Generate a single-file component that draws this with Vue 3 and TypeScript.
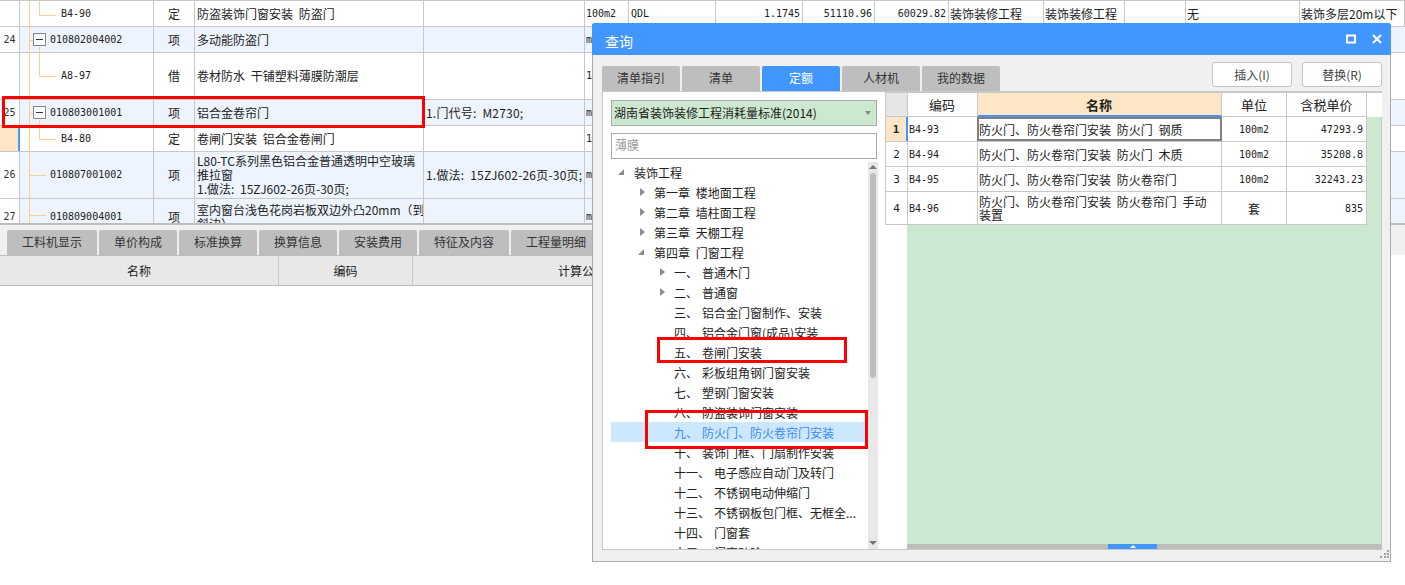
<script setup lang="ts">
interface Row {
  num: string
  code: string
  type: string
  name: string
  feature: string
  unit: string
  h: number
  alt: boolean
  box: boolean
  leaf: boolean
  mark?: boolean
}
const rows: Row[] = [
  { num: '', code: 'B4-90', type: '定', name: '防盗装饰门窗安装 防盗门', feature: '', unit: '100m2', h: 26, alt: false, box: false, leaf: true },
  { num: '24', code: '010802004002', type: '项', name: '多动能防盗门', feature: '', unit: 'm', h: 26, alt: true, box: true, leaf: false },
  { num: '', code: 'A8-97', type: '借', name: '卷材防水 干铺塑料薄膜防潮层', feature: '', unit: '1', h: 47, alt: false, box: false, leaf: true },
  { num: '25', code: '010803001001', type: '项', name: '铝合金卷帘门', feature: '1.门代号: M2730;', unit: 'm', h: 26, alt: true, box: true, leaf: false },
  { num: '', code: 'B4-80', type: '定', name: '卷闸门安装 铝合金卷闸门', feature: '', unit: '1', h: 26, alt: false, box: false, leaf: true, mark: true },
  { num: '26', code: '010807001002', type: '项', name: 'L80-TC系列黑色铝合金普通透明中空玻璃\n推拉窗\n1.做法: 15ZJ602-26页-30页;', feature: '1.做法: 15ZJ602-26页-30页;', unit: 'm', h: 47, alt: true, box: false, leaf: false },
  { num: '27', code: '010809004001', type: '项', name: '室内窗台浅色花岗岩板双边外凸20mm（到\n斜边）', feature: '', unit: 'm', h: 36, alt: true, box: false, leaf: false },
]
const firstExtras = ['QDL', '1.1745', '51110.96', '60029.82', '装饰装修工程', '装饰装修工程', '', '无', '装饰多层20m以下']
const bottomTabs = [
  { t: '工料机显示', w: 90 }, { t: '单价构成', w: 78 }, { t: '标准换算', w: 78 }, { t: '换算信息', w: 78 },
  { t: '安装费用', w: 78 }, { t: '特征及内容', w: 90 }, { t: '工程量明细', w: 90 },
]
const dlgTabs = ['清单指引', '清单', '定额', '人材机', '我的数据']
interface Node { label: string; sub?: string; lvl: number; icon?: 'open' | 'closed'; sel?: boolean }
const tree: Node[] = [
  { label: '装饰工程', lvl: 0, icon: 'open' },
  { label: '第一章 楼地面工程', lvl: 1, icon: 'closed' },
  { label: '第二章 墙柱面工程', lvl: 1, icon: 'closed' },
  { label: '第三章 天棚工程', lvl: 1, icon: 'closed' },
  { label: '第四章 门窗工程', lvl: 1, icon: 'open' },
  { label: '一、', sub: '普通木门', lvl: 2, icon: 'closed' },
  { label: '二、', sub: '普通窗', lvl: 2, icon: 'closed' },
  { label: '三、', sub: '铝合金门窗制作、安装', lvl: 2 },
  { label: '四、', sub: '铝合金门窗(成品)安装', lvl: 2 },
  { label: '五、', sub: '卷闸门安装', lvl: 2 },
  { label: '六、', sub: '彩板组角钢门窗安装', lvl: 2 },
  { label: '七、', sub: '塑钢门窗安装', lvl: 2 },
  { label: '八、', sub: '防盗装饰门窗安装', lvl: 2 },
  { label: '九、', sub: '防火门、防火卷帘门安装', lvl: 2, sel: true },
  { label: '十、', sub: '装饰门框、门扇制作安装', lvl: 2 },
  { label: '十一、', sub: '电子感应自动门及转门', lvl: 2 },
  { label: '十二、', sub: '不锈钢电动伸缩门', lvl: 2 },
  { label: '十三、', sub: '不锈钢板包门框、无框全...', lvl: 2 },
  { label: '十四、', sub: '门窗套', lvl: 2 },
  { label: '十五、', sub: '门窗贴脸', lvl: 2 },
]
const quota = [
  { n: '1', code: 'B4-93', name: '防火门、防火卷帘门安装 防火门 钢质', unit: '100m2', price: '47293.9', h: 25 },
  { n: '2', code: 'B4-94', name: '防火门、防火卷帘门安装 防火门 木质', unit: '100m2', price: '35208.8', h: 25 },
  { n: '3', code: 'B4-95', name: '防火门、防火卷帘门安装 防火卷帘门', unit: '100m2', price: '32243.23', h: 25 },
  { n: '4', code: 'B4-96', name: '防火门、防火卷帘门安装 防火卷帘门 手动\n装置', unit: '套', price: '835', h: 33 },
]
</script>

<template>
  <div class="page">
    <div class="grid">
      <div
        v-for="(r, i) in rows"
        :key="i"
        class="row"
        :class="{ alt: r.alt }"
        :style="{ height: r.h + 'px' }"
      >
        <div class="c num" :class="{ mark: r.mark }">{{ r.num }}</div>
        <div class="c code" :class="{ leaf: r.leaf, boxed: r.box }">
          <span v-if="r.box" class="minus"></span>
          <span class="mono">{{ r.code }}</span>
        </div>
        <div class="c type">{{ r.type }}</div>
        <div class="c name">{{ r.name }}</div>
        <div class="c feature">{{ r.feature }}</div>
        <div class="c unit mono">{{ r.unit }}</div>
        <template v-if="i === 0">
          <div class="c mono">{{ firstExtras[0] }}</div>
          <div class="c mono end">{{ firstExtras[1] }}</div>
          <div class="c mono end">{{ firstExtras[2] }}</div>
          <div class="c mono end">{{ firstExtras[3] }}</div>
          <div class="c tight">{{ firstExtras[4] }}</div>
          <div class="c tight">{{ firstExtras[5] }}</div>
          <div class="c tight">{{ firstExtras[6] }}</div>
          <div class="c tight">{{ firstExtras[7] }}</div>
          <div class="c tight nowrap">{{ firstExtras[8] }}</div>
        </template>
      </div>
      <svg class="lines" width="60" height="223" viewBox="0 0 60 223">
        <g stroke="#fbcf8e" stroke-width="1" fill="none">
          <path d="M29.5 0V223" />
          <path d="M39.5 0V14.5H56" />
          <path d="M29 39.5H33" />
          <path d="M39.5 46V75.5H56" />
          <path d="M29 112.5H33" />
          <path d="M39.5 119V138.5H56" />
          <path d="M29 174.5H46" />
          <path d="M29 214.5H46" />
        </g>
      </svg>
    </div>

    <div class="btabs">
      <div v-for="t in bottomTabs" :key="t.t" class="btab" :style="{ width: t.w + 'px' }">{{ t.t }}</div>
    </div>
    <div class="bhead">
      <div class="bh b1">名称</div>
      <div class="bh b2">编码</div>
      <div class="bh b3">计算公式</div>
    </div>

    <section class="dialog">
      <header class="dtitle">
        <span class="ttext">查询</span>
        <span class="dctl">
          <svg width="10" height="10" viewBox="0 0 10 10"><rect x="1" y="1.5" width="8" height="7" fill="none" stroke="#fff" stroke-width="2" /></svg>
          <svg width="10" height="10" viewBox="0 0 10 10"><path d="M1 1L9 9M9 1L1 9" stroke="#fff" stroke-width="2" fill="none" /></svg>
        </span>
      </header>
      <div class="dbar">
        <div class="dtabs">
          <div v-for="t in dlgTabs" :key="t" class="dtab" :class="{ on: t === '定额' }">{{ t }}</div>
        </div>
        <div class="dbtns">
          <button class="btn">插入(I)</button>
          <button class="btn">替换(R)</button>
        </div>
      </div>
      <div class="panel">
        <div class="left">
          <div class="select">
            <span>湖南省装饰装修工程消耗量标准(2014)</span>
            <i class="caret"></i>
          </div>
          <div class="search">薄膜</div>
          <div class="treewrap">
            <div class="tree">
              <div
                v-for="n in tree"
                :key="n.label"
                class="node"
                :class="['l' + n.lvl, { sel: n.sel }]"
              >
                <i v-if="n.icon" class="ic" :class="n.icon"></i>
                <span>{{ n.label }}</span>
                <span v-if="n.sub" class="sub">{{ n.sub }}</span>
              </div>
            </div>
            <div class="vbar">
              <i class="up"></i>
              <div class="thumb"></div>
              <i class="down"></i>
            </div>
          </div>
        </div>
        <div class="result">
          <div class="qtable">
            <div class="qrow qhead">
              <div class="q qn gray"></div>
              <div class="q qc center">编码</div>
              <div class="q qm center act">名称</div>
              <div class="q qu center">单位</div>
              <div class="q qp center">含税单价</div>
            </div>
            <div v-for="(q, i) in quota" :key="q.n" class="qrow" :style="{ height: q.h + 'px' }">
              <div class="q qn center" :class="{ cur: i === 0 }">{{ q.n }}</div>
              <div class="q qc qmono">{{ q.code }}</div>
              <div class="q qm" :class="{ focus: i === 0 }">{{ q.name }}</div>
              <div class="q qu center" :class="{ qmono: q.unit !== '套' }">{{ q.unit }}</div>
              <div class="q qp rightal qmono">{{ q.price }}</div>
            </div>
          </div>
          <div class="hbar"><div class="hthumb"><i></i></div></div>
        </div>
      </div>
      <div class="grip">
        <svg width="10" height="10" viewBox="0 0 10 10" fill="#a0a0a0">
          <rect x="7" y="0" width="2" height="2" /><rect x="4" y="3" width="2" height="2" /><rect x="7" y="3" width="2" height="2" />
          <rect x="0" y="6" width="2" height="2" /><rect x="4" y="6" width="2" height="2" /><rect x="7" y="6" width="2" height="2" />
        </svg>
      </div>
    </section>

    <div class="red r1"></div>
    <div class="red r2"></div>
    <div class="red r3"></div>
  </div>
</template>

<style scoped>
.page {
  position: relative;
  width: 1405px;
  height: 585px;
  overflow: hidden;
  background: #fff;
  font-family: "Noto Sans CJK SC", "Liberation Sans", sans-serif;
  font-size: 12px;
  color: #222;
  word-spacing: 3px;
}
.grid {
  position: relative;
  height: 225px;
  overflow: hidden;
  border-top: 1px solid #c8c8c8;
  border-bottom: 2px solid #bdbdbd;
  box-sizing: border-box;
}
.row {
  display: grid;
  grid-template-columns: 20px 134px 41px 229px 161px 44px 87px 87px 72px 74px 95px 81px 61px 114px 105px;
  border-bottom: 1px solid #c8c8c8;
  box-sizing: border-box;
}
.row.alt { background: #edf4fe; }
.row.alt .num { background: #fff; }
.c {
  display: flex;
  align-items: center;
  padding: 0 2px;
  border-right: 1px solid #c8c8c8;
  box-sizing: border-box;
  overflow: hidden;
  white-space: pre-wrap;
  line-height: 14px;
}
.num {
  padding: 0;
  font-family: "DejaVu Sans Mono", monospace;
  font-size: 10px;
  justify-content: center;
  color: #333;
}
.num.mark { background: #fde6c6; border-right: 2px solid #4196ff; }
.code { padding-left: 30px; gap: 4px; }
.code.boxed { padding-left: 13px; }
.code.leaf { padding-left: 41px; }
.minus {
  position: relative;
  flex: none;
  width: 13px;
  height: 13px;
  box-sizing: border-box;
  border: 1px solid #888;
  background: #fff;
  z-index: 1;
}
.minus::after {
  content: "";
  position: absolute;
  left: 2px;
  right: 2px;
  top: 5px;
  height: 1px;
  background: #333;
}
.mono { font-family: "DejaVu Sans Mono", monospace; font-size: 10px; }
.type { justify-content: center; }
.name { padding-left: 2px; white-space: pre; }
.feature { padding-left: 2px; white-space: nowrap; letter-spacing: 0.2px; }
.unit { padding-left: 1px; }
.end { justify-content: flex-end; padding-right: 2px; }
.tight { padding-left: 1px; }
.nowrap { white-space: nowrap; }
.lines { position: absolute; left: 0; top: 0; pointer-events: none; }

.btabs {
  display: flex;
  gap: 2px;
  padding: 5px 0 0 7px;
  height: 30px;
  box-sizing: border-box;
  background: #f0f0f0;
}
.btab {
  flex: none;
  height: 25px;
  line-height: 23px;
  text-align: center;
  background: #bebebe;
  color: #333;
  border-radius: 2px 2px 0 0;
}
.bhead {
  display: grid;
  grid-template-columns: 279px 134px 1fr;
  width: 1000px;
  height: 31px;
  background: #e8e8e8;
  border-top: 1px solid #bdbdbd;
  border-bottom: 1px solid #bdbdbd;
  box-sizing: border-box;
}
.bh {
  display: flex;
  align-items: center;
  justify-content: center;
  border-right: 1px solid #c8c8c8;
}
.b3 { justify-content: flex-start; padding-left: 145px; }

.dialog {
  position: absolute;
  left: 592px;
  top: 23px;
  width: 799px;
  height: 539px;
  box-sizing: border-box;
  background: #f0f0f0;
  border: 1px solid #aaa;
  border-top: 0;
  border-radius: 3px 3px 0 0;
  display: flex;
  flex-direction: column;
}
.dtitle {
  flex: none;
  height: 32px;
  margin: 0 -1px;
  padding: 0 9px 0 13px;
  background: #4196ff;
  color: #fff;
  font-size: 14px;
  display: flex;
  align-items: center;
  justify-content: space-between;
  border-radius: 3px 3px 0 0;
}
.ttext { padding-top: 3px; }
.dctl { display: flex; gap: 16px; }
.dbar {
  flex: none;
  height: 36px;
  padding: 0 8px 0 9px;
  display: flex;
  justify-content: space-between;
}
.dtabs { display: flex; gap: 2px; align-items: flex-end; }
.dtab {
  width: 78px;
  height: 25px;
  line-height: 23px;
  text-align: center;
  background: #bebebe;
  color: #333;
  border-radius: 2px 2px 0 0;
}
.dtab.on { background: #4196ff; color: #fff; }
.dbtns { display: flex; gap: 10px; padding-top: 7px; }
.btn {
  width: 80px;
  height: 25px;
  padding: 0;
  border: 1px solid #c4c4c4;
  border-radius: 3px;
  background: #fff;
  color: #444;
  font: inherit;
}
.panel {
  height: 459px;
  margin: 0 8px 0 9px;
  display: flex;
  background: #fff;
  border: 1px solid #c8c8c8;
  box-sizing: border-box;
  flex: none;
}
.left {
  flex: none;
  width: 282px;
  box-sizing: border-box;
  padding: 8px 6px 0 8px;
  display: flex;
  flex-direction: column;
}
.select {
  flex: none;
  width: 266px;
  height: 26px;
  box-sizing: border-box;
  padding: 0 5px 1px 2px;
  background: #cce8cf;
  border: 1px solid #aaa;
  display: flex;
  align-items: center;
  justify-content: space-between;
  color: #222;
}
.caret {
  width: 0;
  height: 0;
  border-left: 3px solid transparent;
  border-right: 3px solid transparent;
  border-top: 4px solid #888;
}
.search {
  flex: none;
  width: 266px;
  height: 26px;
  margin-top: 7px;
  box-sizing: border-box;
  border: 1px solid #aaa;
  padding: 0 3px;
  line-height: 22px;
  color: #999;
}
.treewrap {
  flex: 1;
  min-height: 0;
  margin-top: 3px;
  display: flex;
  overflow: hidden;
}
.tree { width: 257px; flex: none; overflow: hidden; }
.node {
  height: 20px;
  display: flex;
  align-items: center;
  position: relative;
  color: #222;
  white-space: nowrap;
}
.node.l0 { padding-left: 23px; }
.node.l1 { padding-left: 43px; }
.node.l2 { padding-left: 63px; }
.sub { margin-left: 4px; }
.node.sel { background: #cce8ff; color: #3d8bef; }
.ic { position: absolute; width: 0; height: 0; }
.l0 .ic { left: 7px; }
.l1 .ic { left: 27px; }
.l2 .ic { left: 47px; }
.ic.closed {
  margin-left: 2px;
  border-top: 4px solid transparent;
  border-bottom: 4px solid transparent;
  border-left: 5px solid #8c8c8c;
}
.ic.open {
  border-left: 6px solid transparent;
  border-bottom: 6px solid #8c8c8c;
}
.vbar {
  flex: none;
  width: 10px;
  background: #e8e8e8;
  display: flex;
  flex-direction: column;
  align-items: center;
  position: relative;
}
.up, .down {
  flex: none;
  width: 0;
  height: 0;
  border-left: 4px solid transparent;
  border-right: 4px solid transparent;
}
.up { border-bottom: 4px solid #777; margin-top: 3px; }
.down { border-top: 4px solid #777; position: absolute; bottom: 4px; }
.thumb {
  width: 6px;
  height: 205px;
  margin-top: 4px;
  border-radius: 3px;
  background: #bdbdbd;
}
.result {
  flex: 1;
  min-width: 0;
  background: linear-gradient(90deg, #fff 22px, #cde8d0 22px);
  display: flex;
  flex-direction: column;
  position: relative;
}
.qtable { flex: 1; min-height: 0; }
.qrow {
  display: grid;
  grid-template-columns: 23px 70px 244px 65px 80px;
  width: 482px;
  background: #fff;
  box-sizing: border-box;
  border-bottom: 1px solid #c8c8c8;
  height: 25px;
}
.qhead {
  width: 497px;
  height: 25px;
  font-size: 13px;
  border-top: 1px solid #c8c8c8;
  border-bottom: 0;
}
.qhead .q { border-bottom: 1px solid #c8c8c8; }
.q {
  display: flex;
  align-items: center;
  padding: 0 2px;
  box-sizing: border-box;
  border-right: 1px solid #c8c8c8;
  line-height: 13px;
  overflow: hidden;
  white-space: pre-wrap;
}
.qn { border-left: 1px solid #c8c8c8; font-family: "DejaVu Sans Mono", monospace; font-size: 11px; }
.gray { background: #e6e6e6; }
.center { justify-content: center; }
.rightal { justify-content: flex-end; padding-right: 3px; }
.qmono { font-family: "DejaVu Sans Mono", monospace; font-size: 10px; }
.qc { padding-left: 1px; }
.qhead .act {
  background: #fde6c6;
  font-weight: 700;
  border-bottom: 2px solid #4196ff;
}
.cur {
  background: #fde6c6;
  font-weight: 700;
  border-right: 2px solid #4196ff;
}
.qm { padding-left: 1px; }
.focus { border: 2px solid #808080; padding: 0; margin-left: -1px; }
.hbar {
  flex: none;
  height: 5px;
  background: #bdbdb9;
  margin-left: 22px;
  position: relative;
}
.hthumb {
  position: absolute;
  left: 201px;
  top: 0;
  width: 49px;
  height: 5px;
  background: #4196ff;
  display: flex;
  justify-content: center;
  align-items: center;
}
.hthumb i {
  width: 0;
  height: 0;
  border-left: 3px solid transparent;
  border-right: 3px solid transparent;
  border-bottom: 3px solid #fff;
}
.grip {
  flex: 1;
  display: flex;
  justify-content: flex-end;
  align-items: flex-end;
  padding: 0 0 3px;
}
.red {
  position: absolute;
  box-sizing: border-box;
  border: 3px solid #f00;
  pointer-events: none;
}
.r1 { left: 2px; top: 96px; width: 423px; height: 32px; }
.r2 { left: 657px; top: 337px; width: 190px; height: 26px; }
.r3 { left: 645px; top: 410px; width: 223px; height: 39px; }
</style>

<style>
html, body { margin: 0; background: #fff; overflow: hidden; }
</style>
